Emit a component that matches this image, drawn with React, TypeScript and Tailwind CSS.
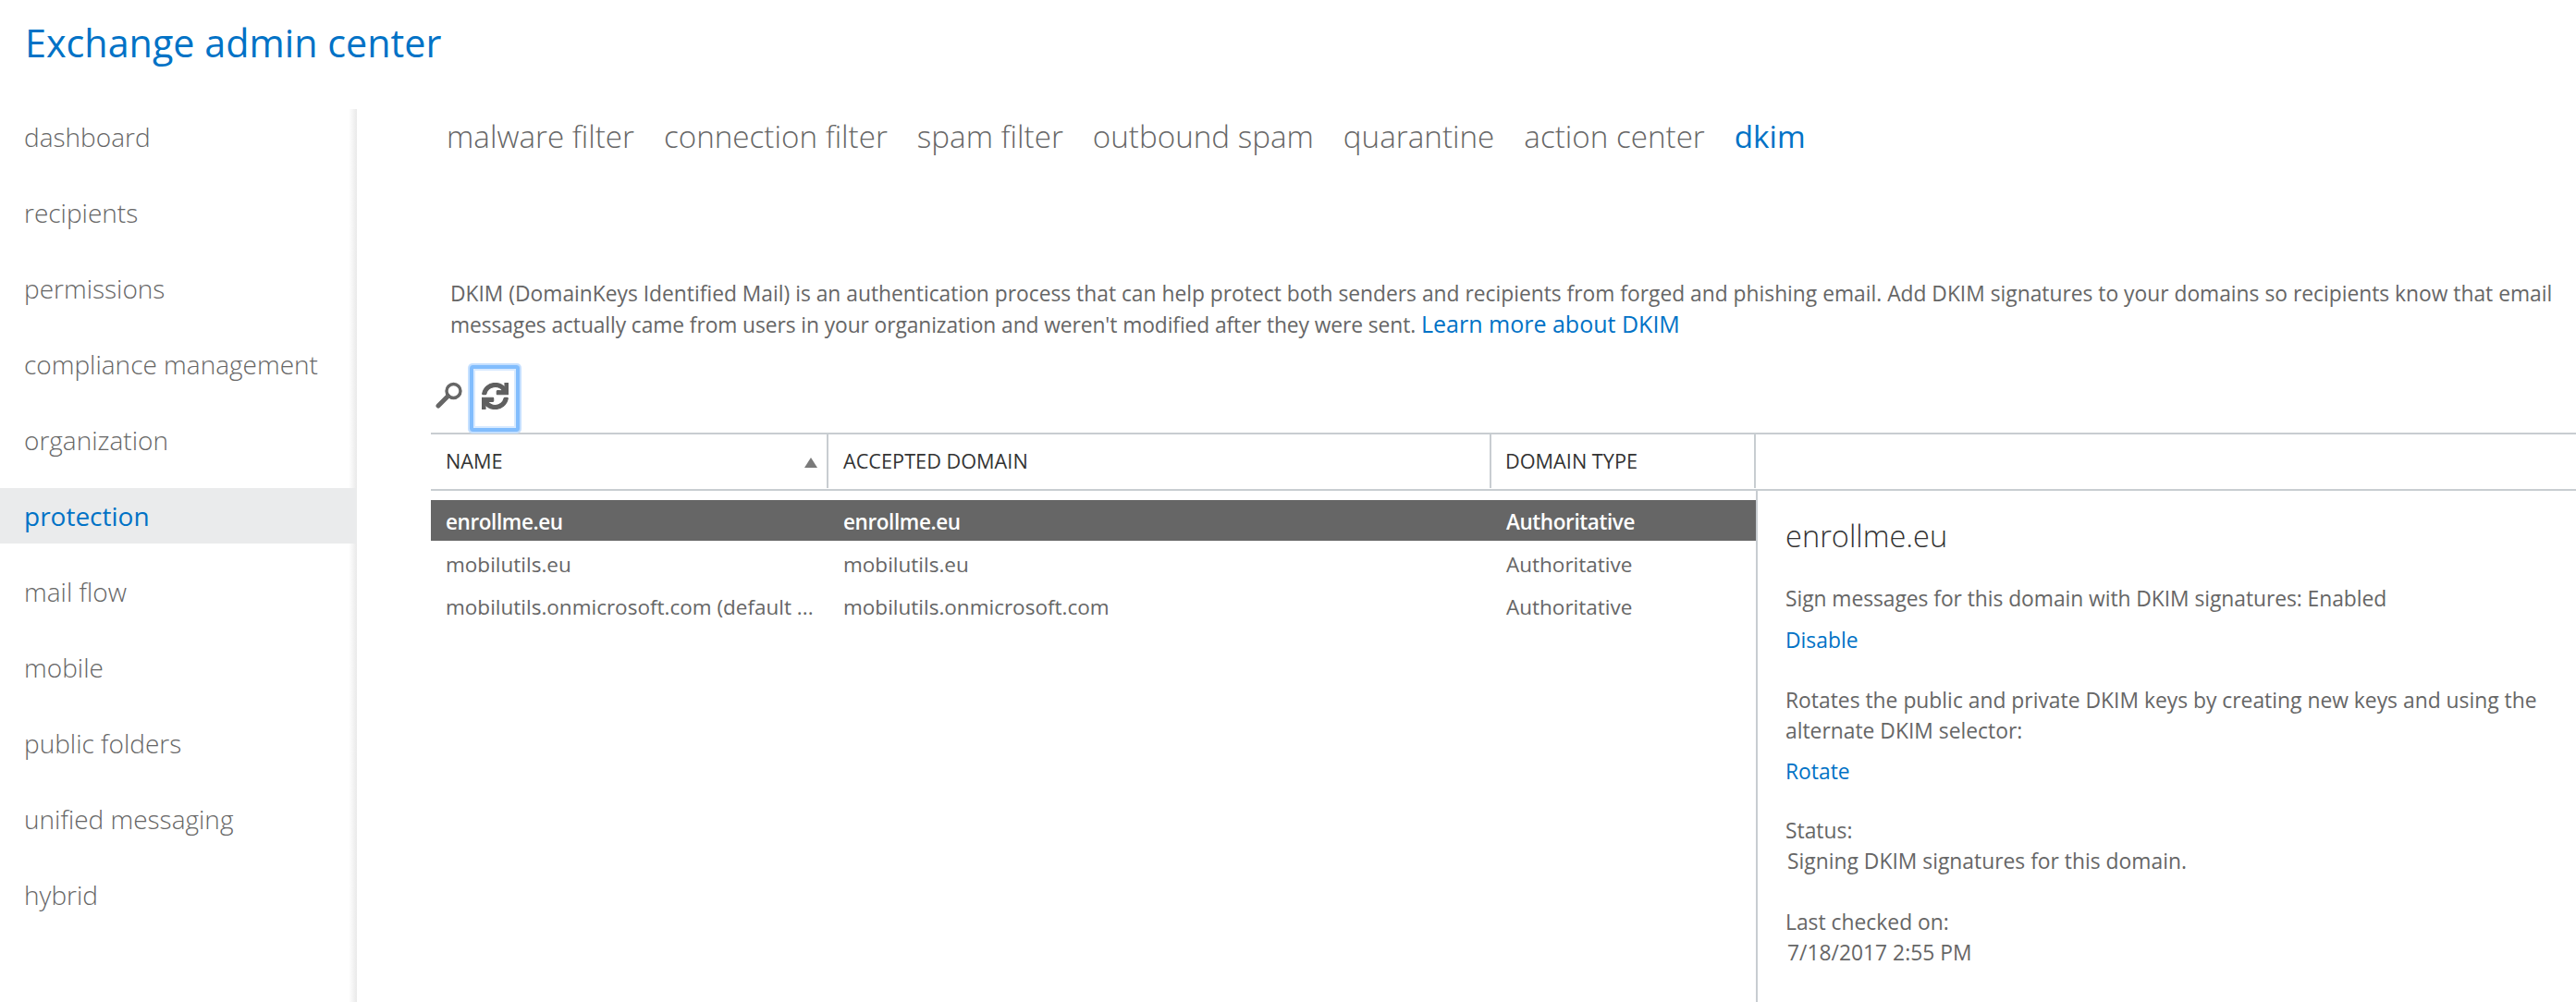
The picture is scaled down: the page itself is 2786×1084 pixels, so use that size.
import React from "react";
import { FaSync } from "react-icons/fa";

const nav = ["dashboard","recipients","permissions","compliance management","organization","protection","mail flow","mobile","public folders","unified messaging","hybrid"];
const tabs = ["malware filter","connection filter","spam filter","outbound spam","quarantine","action center","dkim"];
const rows = [
  ["enrollme.eu","enrollme.eu","Authoritative"],
  ["mobilutils.eu","mobilutils.eu","Authoritative"],
  ["mobilutils.onmicrosoft.com (default ...","mobilutils.onmicrosoft.com","Authoritative"],
];

export default function App() {
  return (
    <div className="h-[1084px] w-[2786px] overflow-hidden bg-white font-['Open_Sans',sans-serif] text-[#666666]">
      <header className="h-[118px] pl-[27px] pt-[17px]">
        <h1 className="text-[41.3px] leading-[58px] text-[#0072c6]">Exchange admin center</h1>
      </header>
      <div className="flex h-[966px]">
        <nav className="w-[386px] shrink-0 bg-[linear-gradient(to_right,#ffffff_97.7%,#e9e9e9)]">
          {nav.map((n) => (
            <div key={n} className={`mb-[22px] flex h-[60px] items-center pl-[26px] text-[28px] font-light ${n === "protection" ? "bg-[#eaebec] text-[#0072c6] font-normal" : "text-[#666666]"}`}>{n}</div>
          ))}
        </nav>
        <main className="min-w-0 flex-1 pl-[80px]">
          <div className="flex h-[60px] items-center gap-[32px] pl-[17px] text-[33.2px] font-light">
            {tabs.map((t) => (
              <span key={t} className={t === "dkim" ? "text-[#0072c6] font-normal" : ""}>{t}</span>
            ))}
          </div>
          <p className="mt-[123px] w-[2310px] pl-[21px] text-[22.8px] leading-[34px] text-[#666666]">
            DKIM (DomainKeys Identified Mail) is an authentication process that can help protect both senders and recipients from forged and phishing email. Add DKIM signatures to your domains so recipients know that email <span className="tracking-[-0.09px]">messages actually came from users in your organization and weren't modified after they were sent.</span> <span className="text-[25px] leading-[30px] text-[#0072c6]">Learn more about DKIM</span>
          </p>
          <div className="mt-[26px] flex h-[73px] items-start">
            <div className="ml-[5px] mt-[18px] w-[37px]">
              <svg width="30" height="29" viewBox="0 0 30 29" fill="none" stroke="#666666">
                <circle cx="19.5" cy="10" r="7.5" strokeWidth="3.4" />
                <path d="M13.5 15.5 L3 26" strokeWidth="5" strokeLinecap="round" />
              </svg>
            </div>
            <div className="flex h-[72px] w-[54px] items-center justify-center rounded-[3px] border-[4px] border-[#82bdfd] shadow-[0_0_0_2px_#c5e0ff,inset_0_0_0_2px_#d8eaff]">
              <FaSync className="mb-[6px] text-[29px] text-[#5f5f5f] [stroke:#5f5f5f] [stroke-width:20px]" />
            </div>
          </div>
          <div className="flex h-[63px] border-y-2 border-[#c8cdd1] pb-[1px] text-[21.7px] text-[#333333]">
            <div className="relative flex w-[430px] items-center border-r-2 border-[#c8cdd1] pl-[16px]">
              NAME
              <div className="absolute right-[10px] top-[25px] h-0 w-0 border-x-[7px] border-b-[11px] border-x-transparent border-b-[#7a7a7a]" />
            </div>
            <div className="flex w-[717px] items-center border-r-2 border-[#c8cdd1] pl-[16px]">ACCEPTED DOMAIN</div>
            <div className="flex w-[286px] items-center border-r-2 border-[#c8cdd1] pl-[15px]">DOMAIN TYPE</div>
            <div className="flex-1" />
          </div>
          <div className="flex">
            <div className="w-[1433px] shrink-0 pt-[10px] text-[22.5px]">
              {rows.map((r, i) => (
                <div key={r[0]} className={`flex items-center ${i === 0 ? "mb-[3px] h-[44px] bg-[#666666] pt-[3px] font-semibold tracking-[-0.4px] text-white" : "h-[46px]"}`}>
                  <div className="w-[430px] shrink-0 whitespace-nowrap pl-[16px]">{r[0]}</div>
                  <div className="w-[717px] shrink-0 pl-[16px]">{r[1]}</div>
                  <div className="pl-[16px]">{r[2]}</div>
                </div>
              ))}
            </div>
            <aside className="h-[560px] flex-1 border-l-2 border-[#c8cdd1] pl-[30px] pt-[26px] text-[22.85px] leading-[33px] text-[#666666]">
              <h2 className="text-[32.6px] font-light leading-[46px] text-[#333333]">enrollme.eu</h2>
              <p className="mt-[28px] tracking-[-0.06px]">Sign messages for this domain with DKIM signatures: Enabled</p>
              <p className="mt-[12px] text-[#0072c6]">Disable</p>
              <p className="mt-[32px] w-[820px]">Rotates the public and private DKIM keys by creating new keys and using the alternate DKIM selector:</p>
              <p className="mt-[11px] text-[#0072c6]">Rotate</p>
              <p className="mt-[31px]">Status:</p>
              <p className="pl-[2px]">Signing DKIM signatures for this domain.</p>
              <p className="mt-[33px]">Last checked on:</p>
              <p className="pl-[2px]">7/18/2017 2:55 PM</p>
            </aside>
          </div>
        </main>
      </div>
    </div>
  );
}
